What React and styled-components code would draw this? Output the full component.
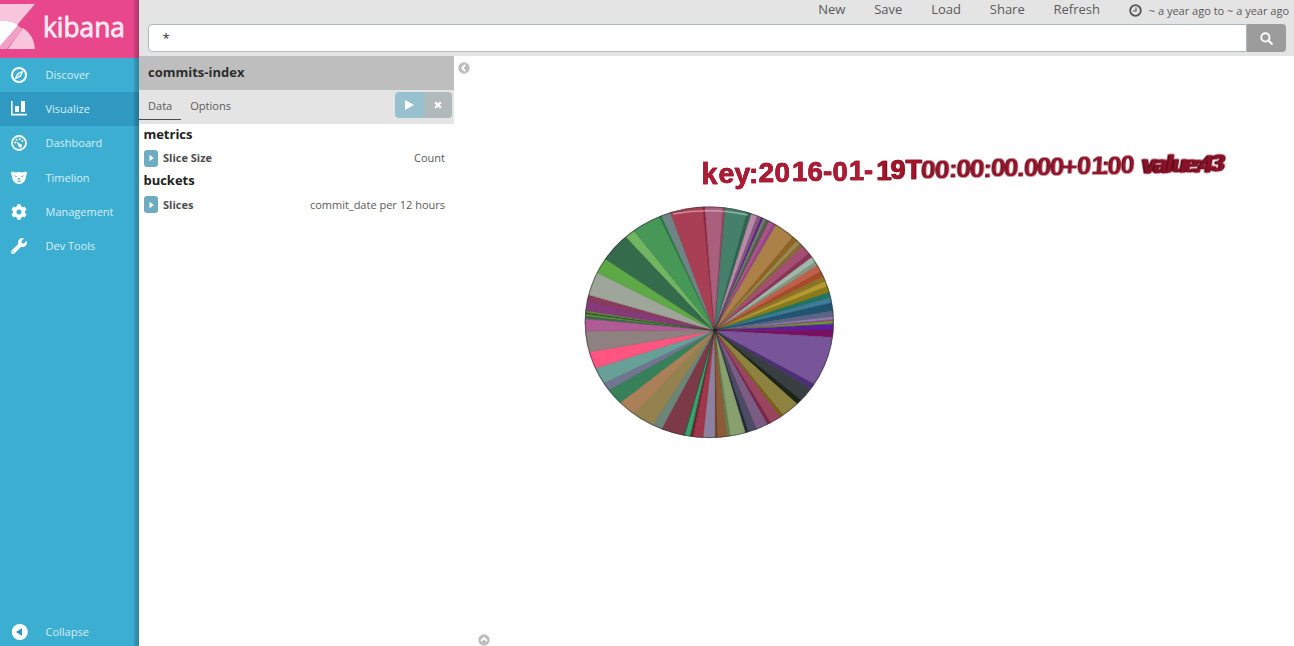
import React from "react";
import styled, { createGlobalStyle } from "styled-components";
import { FaCog, FaWrench } from "react-icons/fa";

const Global = createGlobalStyle`
  * { box-sizing: border-box; }
  body { margin: 0; background: #fff; font-family: "Open Sans", "Noto Sans", sans-serif; color: #5a5a5a; }
  svg { display: block; flex: none; }
`;

const Page = styled.div`
  display: flex;
  width: 1294px;
  height: 646px;
  overflow: hidden;
`;

const Sidebar = styled.nav`
  position: relative;
  display: flex;
  flex-direction: column;
  flex: none;
  width: 139px;
  background: #3caed2;
  &::after {
    content: "";
    position: absolute;
    top: 0;
    right: 0;
    bottom: 0;
    width: 6px;
    background: linear-gradient(to right, rgba(0, 0, 0, 0), rgba(0, 0, 0, 0.14) 35%, rgba(0, 0, 0, 0.24));
  }
`;

const Brand = styled.div`
  height: 58px;
  background: #e8488b;
`;

const NavItem = styled.a`
  display: flex;
  align-items: center;
  height: ${(p) => p.$height || 34}px;
  padding-left: 11px;
  margin-top: ${(p) => (p.$last ? "auto" : 0)};
  margin-bottom: ${(p) => (p.$last ? "-3px" : 0)};
  background: ${(p) => (p.$active ? "#2f99c1" : "transparent")};
  color: #fff;
`;

const NavIcon = styled.span`
  display: flex;
  width: 16px;
  height: 16px;
`;

const NavLabel = styled.span`
  margin-left: 18.5px;
  font-size: 11px;
  line-height: 16px;
  color: #d8eff6;
`;

const Content = styled.main`
  display: flex;
  flex-direction: column;
  width: 1155px;
`;

const Header = styled.header`
  height: 56px;
  flex: none;
  padding: 0 8px 0 9px;
  background: #e4e4e4;
`;

const Menu = styled.div`
  display: flex;
  height: 24px;
  justify-content: flex-end;
  margin-right: -3px;
  font-size: 13px;
  line-height: 18px;
  gap: 28.8px;
`;

const TimeRange = styled.span`
  display: flex;
  align-items: center;
  height: 20px;
  padding-top: 1px;
  gap: 7px;
  font-size: 11px;
  white-space: nowrap;
`;

const Search = styled.div`
  display: flex;
  height: 28px;
`;

const SearchField = styled.div`
  flex: 1;
  padding: 0 13.5px;
  border: 1px solid #b0b8bf;
  border-radius: 4px 0 0 4px;
  background: #fff;
  color: #2d2d2d;
  font-size: 13px;
  line-height: 27px;
`;

const SearchButton = styled.button`
  display: flex;
  align-items: center;
  justify-content: center;
  width: 39px;
  padding: 0;
  border: 0;
  border-radius: 0 4px 4px 0;
  background: #9c9c9c;
`;

const Workspace = styled.div`
  display: flex;
  height: 590px;
`;

const Editor = styled.aside`
  width: 315px;
  flex: none;
`;

const IndexTitle = styled.div`
  height: 34px;
  padding-left: 9px;
  background: #bebebe;
  color: #2d2d2d;
  font-size: 13px;
  font-weight: 700;
  line-height: 33px;
`;

const Tabs = styled.div`
  display: flex;
  height: 34px;
  padding-right: 2px;
  background: #e4e4e4;
`;

const Tab = styled.span`
  height: 30px;
  padding: 0 9px;
  border-bottom: 1px solid ${(p) => (p.$active ? "#4c4c4c" : "transparent")};
  font-size: 11.05px;
  line-height: 32px;
`;

const Actions = styled.div`
  display: flex;
  width: 57px;
  height: 26px;
  margin: 2px 0 0 auto;
  border-radius: 4px;
  overflow: hidden;
`;

const Action = styled.button`
  display: flex;
  align-items: center;
  justify-content: center;
  width: ${(p) => p.$width}px;
  padding: 0;
  border: 0;
  background: ${(p) => p.$color};
`;

const Section = styled.section`
  padding: 0 9px 0 5px;
`;

const SectionTitle = styled.div`
  height: ${(p) => p.$height}px;
  margin-left: -0.6px;
  color: #222;
  font-size: 13px;
  font-weight: 700;
  line-height: 21px;
`;

const Aggregation = styled.div`
  display: flex;
  align-items: center;
  height: ${(p) => p.$height}px;
  font-size: 11px;
  line-height: 18px;
`;

const Expand = styled.span`
  display: flex;
  align-items: center;
  justify-content: center;
  width: 14px;
  height: 17px;
  margin-right: 5px;
  border-radius: 3px;
  background: #6eadc1;
`;

const AggName = styled.b`
  flex: 1;
  color: #4d4d4d;
  font-weight: 700;
`;

const Visualization = styled.div`
  position: relative;
  width: 840px;
`;

const Toggle = styled.span`
  position: absolute;
  left: ${(p) => p.$left}px;
  top: ${(p) => p.$top}px;
`;

/* Each slice: point where it starts on the rim, then its colour, clockwise. */
const slices = [
  [585, 331.5, "#b05a96"], [585, 318.5, "#40684a"], [586, 315.5, "#64a044"], [586, 314, "#2f4d25"],
  [586, 312.5, "#5c8a3a"], [586, 310.5, "#863a7c"], [588, 301, "#8a3a5c"], [589.5, 295, "#9da698"],
  [599, 273.5, "#5da945"], [607, 260, "#336b4b"], [627, 238, "#70b55f"], [635, 232, "#479857"],
  [660, 218, "#257a42"], [662, 217, "#6f8585"], [671, 214, "#a93f55"], [703, 208, "#981f3e"],
  [705, 207, "#aa5f7c"], [723, 208, "#874763"], [725.5, 208, "#45806b"], [747, 213, "#2e6450"],
  [751, 215, "#b98aa8"], [757, 217, "#87567f"], [761, 218, "#5a1b8c"], [763, 219, "#6f7c68"],
  [766, 220, "#545a4c"], [769, 222, "#b0508c"], [773, 224, "#944783"], [775.5, 226, "#ab8147"],
  [792, 238, "#8f6425"], [796, 242, "#9b8a4e"], [799, 244.5, "#876733"], [802, 247, "#a54e73"],
  [808, 254, "#8a3558"], [811, 258, "#9fb8aa"], [814, 263, "#839783"], [816.5, 266, "#c06048"],
  [820, 272, "#a84a28"], [822, 277, "#8f7325"], [824, 282, "#b59a30"], [826, 287, "#8b7b18"],
  [828, 293, "#1f7565"], [829.5, 298, "#3e7a9a"], [831, 303, "#1f5570"], [832.5, 311, "#5e6388"],
  [833, 317, "#8a85a8"], [833, 319.5, "#a13b9b"], [833, 321, "#6a982a"], [833, 324, "#5a1fa0"],
  [833, 330, "#7a1060"], [833, 337.5, "#785598"], [814, 384, "#4f2e78"], [811, 389, "#383e42"],
  [801, 400, "#1c2418"], [797, 404, "#8e8240"], [783, 415, "#7a6215"], [780, 417, "#9a4560"],
  [770, 422, "#7d2348"], [767, 424, "#7a5c85"], [756, 428, "#554568"], [754, 429, "#4a4c62"],
  [748, 431, "#23283c"], [745, 432, "#88a06e"], [730, 435, "#62854e"], [727, 436, "#8c5c38"],
  [717, 437, "#703a20"], [715, 437, "#8c82a0"], [703, 437, "#a0364a"], [693, 436, "#7a1c2c"],
  [691, 435, "#14623c"], [690, 435, "#3da070"], [685, 434, "#0d6a3b"], [684, 434, "#7c3a48"],
  [662, 428, "#6c8578"], [653, 424, "#94824e"], [634, 413, "#ab8058"], [621, 402, "#37805a"],
  [609, 390, "#707590"], [604, 383, "#68a098"], [596, 368, "#ff5580"], [589, 352, "#8f817f"],
];

const APEX = [714.5, 330.5];
const beyond = ([x, y]) => `${APEX[0] + (x - APEX[0]) * 1.3},${APEX[1] + (y - APEX[1]) * 1.3}`;

function Pie() {
  return (
    <g>
      <defs>
        <clipPath id="rim"><ellipse cx="709.3" cy="322.3" rx="124.5" ry="115.7" /></clipPath>
      </defs>
      <g clipPath="url(#rim)">
        {slices.map((s, i) => {
          const next = slices[(i + 1) % slices.length];
          return (
            <polygon key={i} points={`${APEX.join(",")} ${beyond(s)} ${beyond(next)}`}
              fill={s[2]} stroke={s[2]} strokeWidth=".5" />
          );
        })}
        {slices.map((s, i) => (
          <path key={i} d={`M${APEX.join(",")}L${beyond(s)}`} stroke="#222" strokeOpacity=".18" strokeWidth=".7" />
        ))}
      </g>
      <ellipse cx="709.3" cy="322.3" rx="124.1" ry="115.3" fill="none" stroke="#38383c" strokeOpacity=".55" strokeWidth="1.2" />
      <path d="M673 214Q711 207 748 215" fill="none" stroke="#fff" strokeOpacity=".4" strokeWidth="1.3" />
    </g>
  );
}

const Label = styled.text`
  font-family: "Liberation Sans", Arial, sans-serif;
  font-weight: 700;
  fill: ${(p) => p.$color};
  stroke: ${(p) => p.$color};
  stroke-width: ${(p) => p.$weight};
  filter: ${(p) => p.$depth};
`;

/* The tooltip recedes to the right: glyphs shrink, lean and crowd together. */
const labelParts = [
  { text: "key:2016-01-", skew: 0, weight: 0.5, color: "#ab1c35", depth: "drop-shadow(.5px 0 0 #8c1428)",
    xs: [701.5, 718.5, 734.5, 749, 758.5, 774.5, 792, 807.5, 823, 832.5, 849, 864] },
  { text: "19T", skew: 0, weight: 0.4, color: "#a01529", depth: "drop-shadow(1px 0 0 #70101f)",
    xs: [876, 890, 905] },
  { text: "00:00:00.000+01:00", skew: -3, weight: 0, color: "#98142a", depth: "drop-shadow(-.9px .4px 0 #4b0b16)",
    xs: [921, 935, 949, 956.5, 970, 983.5, 991, 1004, 1017.5, 1024, 1037, 1050, 1062.5, 1077, 1091.5, 1101.5, 1107.5, 1120.5] },
  { text: "value:43", skew: -10, weight: 0.3, color: "#8c1228", depth: "drop-shadow(-1.2px .4px 0 #5c0b19) drop-shadow(1.4px 0 0 #6d0c1d)",
    xs: [1141, 1153, 1165, 1171, 1183, 1193, 1198, 1210] },
];

const Tooltip3D = () => labelParts.map((part) => {
  const base = 183.6 - (part.xs[0] - 702) * 0.0235;
  return (
    <Label key={part.text} $color={part.color} $depth={part.depth} $weight={part.weight}
      transform={`translate(0 ${base}) skewX(${part.skew})`}>
      {part.text.split("").map((ch, i) => (
        <tspan key={i} x={part.xs[i]} y={-(part.xs[i] - part.xs[0]) * 0.0235}
          fontSize={28.6 - (part.xs[i] - 702) * 0.009}>{ch}</tspan>
      ))}
    </Label>
  );
});

const Logo = () => (
  <svg width="139" height="58" viewBox="0 0 139 58">
    <path d="M0 4H35L17 25Q10 20 0 21Z" fill="#f8c5dc" />
    <path d="M8 49L23 28Q34 35 35 49Z" fill="#f8c5dc" />
    <path d="M0 49V46L17 25L23 29L7 49Z" fill="#f29fc5" />
    <path d="M0 21Q10 20 18 25L0 46Z" fill="#fff" />
    <text x="43" y="37" fontSize="27" textLength="82" lengthAdjust="spacingAndGlyphs"
      fontFamily="Open Sans, sans-serif" fill="#ffeaf4" stroke="#ffeaf4" strokeWidth=".8">kibana</text>
  </svg>
);

const CompassIcon = () => (
  <svg width="16" height="16" viewBox="0 0 16 16" fill="none" stroke="#fff">
    <circle cx="8" cy="8" r="7" strokeWidth="2" />
    <path d="M11.5 4.5L9.3 9.3L4.5 11.5L6.7 6.7Z" strokeWidth="1.3" />
    <circle cx="8" cy="8" r=".7" fill="#fff" stroke="none" />
  </svg>
);

const ChartIcon = () => (
  <svg width="16" height="16" viewBox="0 0 16 16" fill="#fff">
    <path d="M0 0h1.6v12.8H16V14.5H0ZM4 5h4v6H4ZM10 0h4v11h-4Z" />
  </svg>
);

const GaugeIcon = () => (
  <svg width="16" height="16" viewBox="0 0 16 16">
    <circle cx="8" cy="8" r="7" fill="none" stroke="#fff" strokeWidth="1.8" />
    <g fill="#fff">
      <circle cx="4.2" cy="7.5" r="1" /><circle cx="5.6" cy="4.7" r="1" />
      <circle cx="8.8" cy="4" r="1" /><circle cx="11.4" cy="6" r="1" />
      <path d="M5.4 6.6L10 9.2A1.8 1.8 0 1 1 7.6 11.2Z" />
    </g>
  </svg>
);

const BearIcon = () => (
  <svg width="16" height="16" viewBox="0 0 16 16">
    <path d="M0 2Q3 1.2 4.5 2.6Q8 1.4 11.5 2.6Q13 1.2 16 2Q16.2 4.6 15 5.8Q15 11 11.5 13Q8 15 4.5 13Q1 11 1 5.8Q-.2 4.6 0 2Z" fill="#fff" />
    <path d="M3.3 5.2L6 6.2L5.2 7L3.5 6.2ZM12.7 5.2L10 6.2L10.8 7L12.5 6.2ZM6.5 8.3H9.5L8.6 9.8H7.4ZM5.8 11Q8 12.8 10.2 11L9.8 10.5Q8 11.5 6.2 10.5Z" fill="#3caed2" />
  </svg>
);

const CollapseIcon = () => (
  <svg width="18" height="16" viewBox="0 0 18 16">
    <circle cx="8.8" cy="8" r="8" fill="#fff" />
    <path d="M11 4V12L5 8Z" fill="#2f99c1" />
  </svg>
);

const ClockIcon = () => (
  <svg width="13" height="13" viewBox="0 0 13 13" fill="none" stroke="#555">
    <circle cx="6.5" cy="6.5" r="5.3" strokeWidth="1.8" />
    <path d="M7 3.3V7H4" strokeWidth="1.1" />
  </svg>
);

const Chevron = ({ up }) => (
  <svg width="12" height="12" viewBox="0 0 12 12">
    <circle cx="6" cy="6" r="5.7" fill="#bdbdbd" />
    <path d={up ? "M3 7L6 4L9 7" : "M7.2 2.9L4.2 6L7.2 9.1"} fill="none" stroke="#fff" strokeWidth="1.9" />
  </svg>
);

const ExpandButton = () => (
  <Expand><svg width="5" height="8" viewBox="0 0 5 8"><path d="M.5 .8L4.7 4L.5 7.2Z" fill="#fff" /></svg></Expand>
);

const navItems = [
  { label: "Discover", icon: <CompassIcon /> },
  { label: "Visualize", icon: <ChartIcon />, active: true },
  { label: "Dashboard", icon: <GaugeIcon /> },
  { label: "Timelion", icon: <BearIcon />, height: 35 },
  { label: "Management", icon: <FaCog size={16} /> },
  { label: "Dev Tools", icon: <FaWrench size={16} /> },
];

export default function App() {
  return (
    <Page>
      <Global />
      <Sidebar>
        <Brand><Logo /></Brand>
        {navItems.map((n) => (
          <NavItem key={n.label} $active={n.active} $height={n.height}>
            <NavIcon>{n.icon}</NavIcon>
            <NavLabel>{n.label}</NavLabel>
          </NavItem>
        ))}
        <NavItem $last>
          <NavIcon><CollapseIcon /></NavIcon>
          <NavLabel>Collapse</NavLabel>
        </NavItem>
      </Sidebar>
      <Content>
        <Header>
          <Menu>
            <span>New</span><span>Save</span><span>Load</span><span>Share</span><span>Refresh</span>
            <TimeRange><ClockIcon />~ a year ago to ~ a year ago</TimeRange>
          </Menu>
          <Search>
            <SearchField>*</SearchField>
            <SearchButton>
              <svg width="13" height="13" viewBox="0 0 13 13" fill="none" stroke="#fff">
                <circle cx="5.4" cy="5.4" r="4.1" strokeWidth="1.9" />
                <path d="M8.5 8.5L11.8 11.8" strokeWidth="2.2" strokeLinecap="round" />
              </svg>
            </SearchButton>
          </Search>
        </Header>
        <Workspace>
          <Editor>
            <IndexTitle>commits-index</IndexTitle>
            <Tabs>
              <Tab $active>Data</Tab>
              <Tab>Options</Tab>
              <Actions>
                <Action $width={29} $color="#98c1d0">
                  <svg width="9" height="10" viewBox="0 0 9 10"><path d="M0 0L9 5L0 10Z" fill="#fff" /></svg>
                </Action>
                <Action $width={28} $color="#b0b9bb">
                  <svg width="8" height="8" viewBox="0 0 8 8"><path d="M1.2 1.2L6.8 6.8M6.8 1.2L1.2 6.8" stroke="#fff" strokeWidth="2.3" /></svg>
                </Action>
              </Actions>
            </Tabs>
            <Section>
              <SectionTitle $height={22}>metrics</SectionTitle>
              <Aggregation $height={24}><ExpandButton /><AggName>Slice Size</AggName>Count</Aggregation>
              <SectionTitle $height={22}>buckets</SectionTitle>
              <Aggregation $height={25}><ExpandButton /><AggName>Slices</AggName>commit_date per 12 hours</Aggregation>
            </Section>
          </Editor>
          <Visualization>
            <svg width="840" height="590" viewBox="454 56 840 590">
              <Pie />
              <Tooltip3D />
            </svg>
            <Toggle $left={4} $top={6}><Chevron /></Toggle>
            <Toggle $left={24} $top={578}><Chevron up /></Toggle>
          </Visualization>
        </Workspace>
      </Content>
    </Page>
  );
}
